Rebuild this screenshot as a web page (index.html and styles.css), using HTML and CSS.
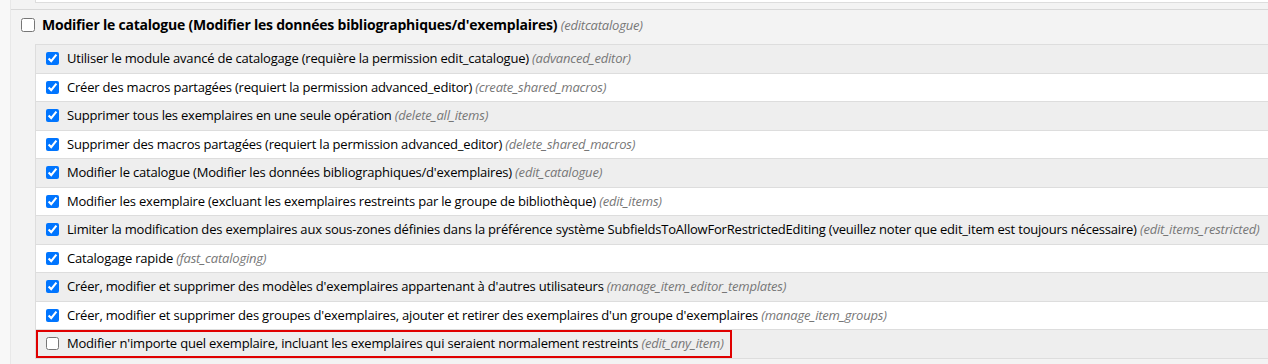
FILE: index.html
```html
<!DOCTYPE html>
<html>
<head>
<meta charset="UTF-8"/>
<title>Permissions</title>
<link rel="stylesheet" href="styles.css">
</head>
<body>
<div class="perms">
	<div class="permItem prevItem">
		<div class="subTail"></div>
	</div>
	<div class="permItem">
		<label class="parent"><input type="checkbox"/><span class="name">Modifier le catalogue (Modifier les données bibliographiques/d'exemplaires)</span> <span class="code">(editcatalogue)</span></label>
		<ul class="sub">
			<li><label><input type="checkbox" checked="checked"/>Utiliser le module avancé de catalogage (requière la permission edit_catalogue) <span class="code">(advanced_editor)</span></label></li>
			<li><label><input type="checkbox" checked="checked"/>Créer des macros partagées (requiert la permission advanced_editor) <span class="code">(create_shared_macros)</span></label></li>
			<li><label><input type="checkbox" checked="checked"/>Supprimer tous les exemplaires en une seule opération <span class="code">(delete_all_items)</span></label></li>
			<li><label><input type="checkbox" checked="checked"/>Supprimer des macros partagées (requiert la permission advanced_editor) <span class="code">(delete_shared_macros)</span></label></li>
			<li><label><input type="checkbox" checked="checked"/>Modifier le catalogue (Modifier les données bibliographiques/d'exemplaires) <span class="code">(edit_catalogue)</span></label></li>
			<li><label><input type="checkbox" checked="checked"/>Modifier les exemplaire (excluant les exemplaires restreints par le groupe de bibliothèque) <span class="code">(edit_items)</span></label></li>
			<li><label><input type="checkbox" checked="checked"/>Limiter la modification des exemplaires aux sous-zones définies dans la préférence système SubfieldsToAllowForRestrictedEditing (veuillez noter que edit_item est toujours nécessaire) <span class="code">(edit_items_restricted)</span></label></li>
			<li><label><input type="checkbox" checked="checked"/>Catalogage rapide <span class="code">(fast_cataloging)</span></label></li>
			<li><label><input type="checkbox" checked="checked"/>Créer, modifier et supprimer des modèles d'exemplaires appartenant à d'autres utilisateurs <span class="code">(manage_item_editor_templates)</span></label></li>
			<li><label><input type="checkbox" checked="checked"/>Créer, modifier et supprimer des groupes d'exemplaires, ajouter et retirer des exemplaires d'un groupe d'exemplaires <span class="code">(manage_item_groups)</span></label></li>
			<li><label class="highlight"><input type="checkbox"/>Modifier n'importe quel exemplaire, incluant les exemplaires qui seraient normalement restreints <span class="code">(edit_any_item)</span></label></li>
		</ul>
	</div>
	<div class="permItem"></div>
</div>
</body>
</html>
```

FILE: styles.css
```css
html, body { margin: 0; }
body {
	background: #f8f8f8;
	font-family: 'Open Sans', 'Noto Sans', sans-serif;
	font-size: 13px;
	letter-spacing: -0.2px;
	color: #000;
	height: 364px;
	overflow: hidden;
}
.perms {
	margin-left: 10px;
	border-left: 1px solid #e8e8e8;
	background: #f3f3f3;
	min-height: 364px;
}
.permItem { border-bottom: 1px solid #d8d8d8; padding-bottom: 5px; }
.prevItem { padding-bottom: 6px; }
.subTail {
	margin-left: 24px; height: 2px;
	background: #fff;
	border-left: 1px solid #ddd;
	border-bottom: 1px solid #ddd;
}
label { display: block; white-space: nowrap; }
input[type=checkbox] { margin: 0 8px 0 0; width: 13px; height: 13px; vertical-align: -2px; }
label.parent {
	padding: 2px 0 6px 10px;
	line-height: 26px;
	font-weight: bold;
	font-size: 14px;
	letter-spacing: -0.22px;
}
label.parent input { width: 14px; height: 14px; margin-right: 7px; vertical-align: -2px; }
.code { color: #777; font-style: italic; font-weight: normal; font-size: 13px; letter-spacing: -0.2px; }
ul.sub {
	list-style: none; margin: 0 0 0 24px; padding: 0;
	border-top: 1px solid #ddd;
	border-left: 1px solid #ddd;
	border-bottom: 1px solid #ddd;
}
ul.sub > li { background: #eee; border-top: 1px solid #ddd; display: flex; }
ul.sub > li:first-child { border-top: none; }
ul.sub > li:nth-child(even) { background: #fff; }
ul.sub label {
	line-height: 19.5px;
	padding: 4px 8px 4px 10px;
}
ul.sub label.highlight {
	border: 2px solid #e00000;
	padding: 2px 6px 2px 8px;
}
```
